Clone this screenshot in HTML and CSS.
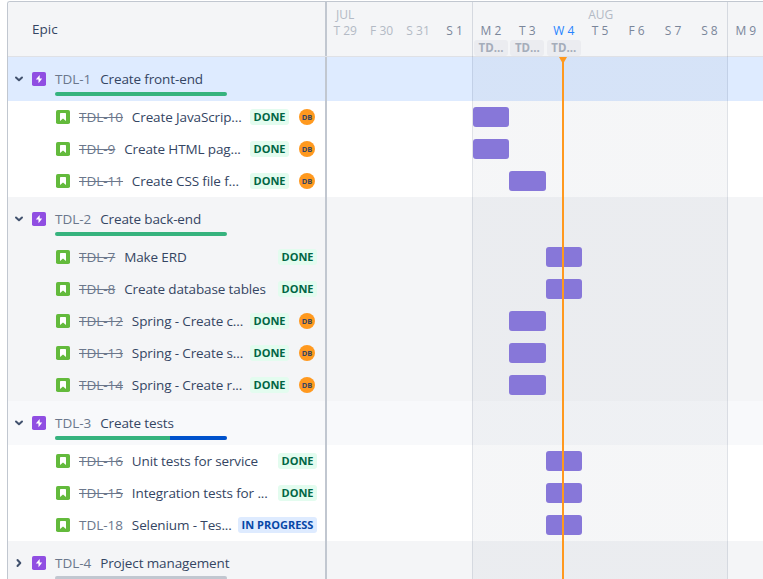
FILE: index.html
```html
<!DOCTYPE html>
<html lang="en">
<head>
<meta charset="utf-8">
<title>Roadmap</title>
<link rel="stylesheet" href="styles.css">
</head>
<body>
<svg class="defs" width="0" height="0" aria-hidden="true">
  <symbol id="epic" viewBox="0 0 14 14"><rect width="14" height="14" rx="1.8" fill="#904ee2"/><path d="M7.7 3.1 3.8 7.5H6.5V11.2L10.2 6.6H7.7Z" fill="#fff"/></symbol>
  <symbol id="story" viewBox="0 0 14 14"><rect width="14" height="14" rx="1.8" fill="#63ba3c"/><path d="M4 3.7q0-.7.7-.7h4.6q.7 0 .7.7V11L7 8.4 4 11Z" fill="#fff"/></symbol>
  <symbol id="chevron" viewBox="0 0 10 10"><path d="M2 3.5 5 6.3 8 3.5" fill="none" stroke="#42526e" stroke-width="2" stroke-linecap="round" stroke-linejoin="round"/></symbol>
</svg>
<main class="roadmap">
  <header class="head">
    <div class="head-title">Epic</div>
    <div class="calendar">
      <div class="months"><span class="jul">JUL</span><span class="aug">AUG</span></div>
      <div class="days">
        <span class="past">T 29</span><span class="past">F 30</span><span class="past">S 31</span><span>S 1</span><span>M 2</span><span>T 3</span><span class="today">W 4</span><span>T 5</span><span>F 6</span><span>S 7</span><span>S 8</span><span>M 9</span>
      </div>
      <div class="sprints"><span>TD...</span><span>TD...</span><span>TD...</span></div>
    </div>
  </header>
  <div class="rows" id="rows"></div>
  <div class="week"></div>
  <div class="now"></div>
</main>
<script src="roadmap.js"></script>
</body>
</html>
```
FILE: styles.css
```css
* { box-sizing: border-box; }
body {
  margin: 0;
  background: #fff;
  font-family: "Open Sans", "Noto Sans", sans-serif;
  font-size: 13.5px;
  color: #172b4d;
  overflow: hidden;
}
.defs { position: absolute; }
.roadmap {
  --day: 36.43px;
  position: relative;
  margin: 1px 0 0 7px;
  height: 578px;
  border-left: 1px solid #c1c7d0;
  border-top: 1px solid #c1c7d0;
  border-top-left-radius: 3px;
  overflow: hidden;
}
.head {
  display: flex;
  height: 55px;
  background: #f4f5f7;
  border-bottom: 1px solid #dfe1e6;
}
.head-title, .side {
  flex: none;
  width: 319px;
  border-right: 2px solid #c1c7d0;
}
.head-title { padding: 18px 0 0 24px; line-height: 18px; color: #344563; }
.calendar { flex: none; width: 437px; padding-top: 6px; font-size: 12px; line-height: 14px; }
.months { display: flex; padding-left: 9px; height: 15px; color: #b3bac5; }
.aug { margin-left: 234px; }
.days { display: flex; height: 17px; padding-top: 1px; color: #7a869a; }
.days span { flex: none; width: var(--day); text-align: center; }
.days .past { color: #b3bac5; }
.days .today { color: #2684ff; }
.sprints { display: flex; gap: 2.4px; padding-left: 147px; }
.sprints span {
  width: 34px;
  height: 16px;
  border-radius: 3px;
  background: #ebecf0;
  color: #a5adba;
  font-size: 11.5px;
  font-weight: 700;
  line-height: 16px;
  text-align: center;
}
.row { display: flex; height: 32px; background: #fff; }
.row.epic { height: 44px; }
.row.blue { background: #deebff; }
.row.grey { background: #f4f5f7; }
.row.light { background: #f8f9fb; }
.side { display: flex; align-items: center; white-space: nowrap; }
.epic .side { padding-left: 6px; }
.child .side { padding: 0 8px 0 48px; }
.icon { flex: none; width: 14px; height: 14px; }
.chevron { flex: none; width: 10px; height: 10px; margin-right: 8px; }
.chevron.closed { transform: rotate(-90deg); }
.epic-body { margin-left: 9px; padding-top: 13px; height: 44px; }
.label { display: flex; gap: 8.8px; line-height: 18px; }
.child .label { margin: 0 auto 0 9px; }
.key { color: #6b778c; }
.key.done { text-decoration: line-through; }
.name { color: #344563; letter-spacing: -.12px; }
.progress {
  display: flex;
  width: 172px;
  height: 4px;
  margin-top: 4px;
  border-radius: 2px;
  background: #c1c7d0;
  overflow: hidden;
}
.progress i:first-child { background: #36b37e; }
.progress i:last-child { background: #0052cc; }
.lozenge {
  flex: none;
  width: 39px;
  height: 16px;
  border-radius: 3px;
  background: #e3fcef;
  color: #006644;
  font-size: 11px;
  font-weight: 700;
  line-height: 16px;
  text-align: center;
}
.lozenge.active { width: 79px; background: #deebff; color: #0747a6; }
.avatar {
  flex: none;
  width: 16px;
  height: 16px;
  margin: 0 2px 0 10px;
  border-radius: 50%;
  background: #ff991f;
  color: #344563;
  font-size: 7.5px;
  font-weight: 700;
  line-height: 16px;
  text-align: center;
}
.track { flex: 1; padding-top: 6px; }
.bar {
  position: relative;
  z-index: 1;
  height: 20px;
  width: 36.4px;
  border-radius: 3px;
  background: #8777d9;
}
.week {
  position: absolute;
  top: 0;
  left: 464px;
  width: 256px;
  height: 578px;
  border: solid rgba(9, 30, 66, .13);
  border-width: 0 1px;
  background: linear-gradient(transparent 55px, rgba(9, 30, 66, .04) 55px) padding-box;
}
.now { position: absolute; z-index: 2; top: 55px; left: 554px; width: 2px; height: 523px; background: #ff991f; }
.now::before {
  content: "";
  position: absolute;
  left: -3px;
  border: solid transparent;
  border-width: 0 4px;
  border-top: 7px solid #ff991f;
}
```
FILE: roadmap.js
```js
const epics = [
  { key: "TDL-1", name: "Create front-end", tone: "blue", done: 100, active: 0, items: [
    ["TDL-10", "Create JavaScrip...", 4, true],
    ["TDL-9", "Create HTML pag...", 4, true],
    ["TDL-11", "Create CSS file f...", 5, true]] },
  { key: "TDL-2", name: "Create back-end", tone: "grey", childTone: "grey", done: 100, active: 0, items: [
    ["TDL-7", "Make ERD", 6],
    ["TDL-8", "Create database tables", 6],
    ["TDL-12", "Spring - Create c...", 5, true],
    ["TDL-13", "Spring - Create s...", 5, true],
    ["TDL-14", "Spring - Create r...", 5, true]] },
  { key: "TDL-3", name: "Create tests", tone: "light", done: 66.7, active: 33.3, items: [
    ["TDL-16", "Unit tests for service", 6],
    ["TDL-15", "Integration tests for ...", 6],
    ["TDL-18", "Selenium - Tes...", 6, false, true]] },
  { key: "TDL-4", name: "Project management", tone: "grey", done: 0, active: 0, closed: true, items: [] }
];
const DAY = 36.43;
const icon = (id, cls) => `<svg class="${cls}"><use href="#${id}"/></svg>`;
let html = "";
for (const e of epics) {
  html += `<div class="row epic ${e.tone}"><div class="side">${icon("chevron", "chevron" + (e.closed ? " closed" : ""))}${icon("epic", "icon")}
    <div class="epic-body"><div class="label"><span class="key">${e.key}</span><span class="name">${e.name}</span></div>
    <div class="progress"><i style="width:${e.done}%"></i><i style="width:${e.active}%"></i></div></div></div><div class="track"></div></div>`;
  for (const [key, name, day, avatar, active] of e.items) {
    html += `<div class="row child ${e.childTone || ""}"><div class="side">${icon("story", "icon")}
      <div class="label"><span class="key ${active ? "" : "done"}">${key}</span><span class="name">${name}</span></div>
      <span class="lozenge ${active ? "active" : ""}">${active ? "IN PROGRESS" : "DONE"}</span>${avatar ? '<span class="avatar">DB</span>' : ""}</div>
      <div class="track"><div class="bar" style="margin-left:${(day * DAY).toFixed(1)}px"></div></div></div>`;
  }
}
document.getElementById("rows").innerHTML = html;
```
